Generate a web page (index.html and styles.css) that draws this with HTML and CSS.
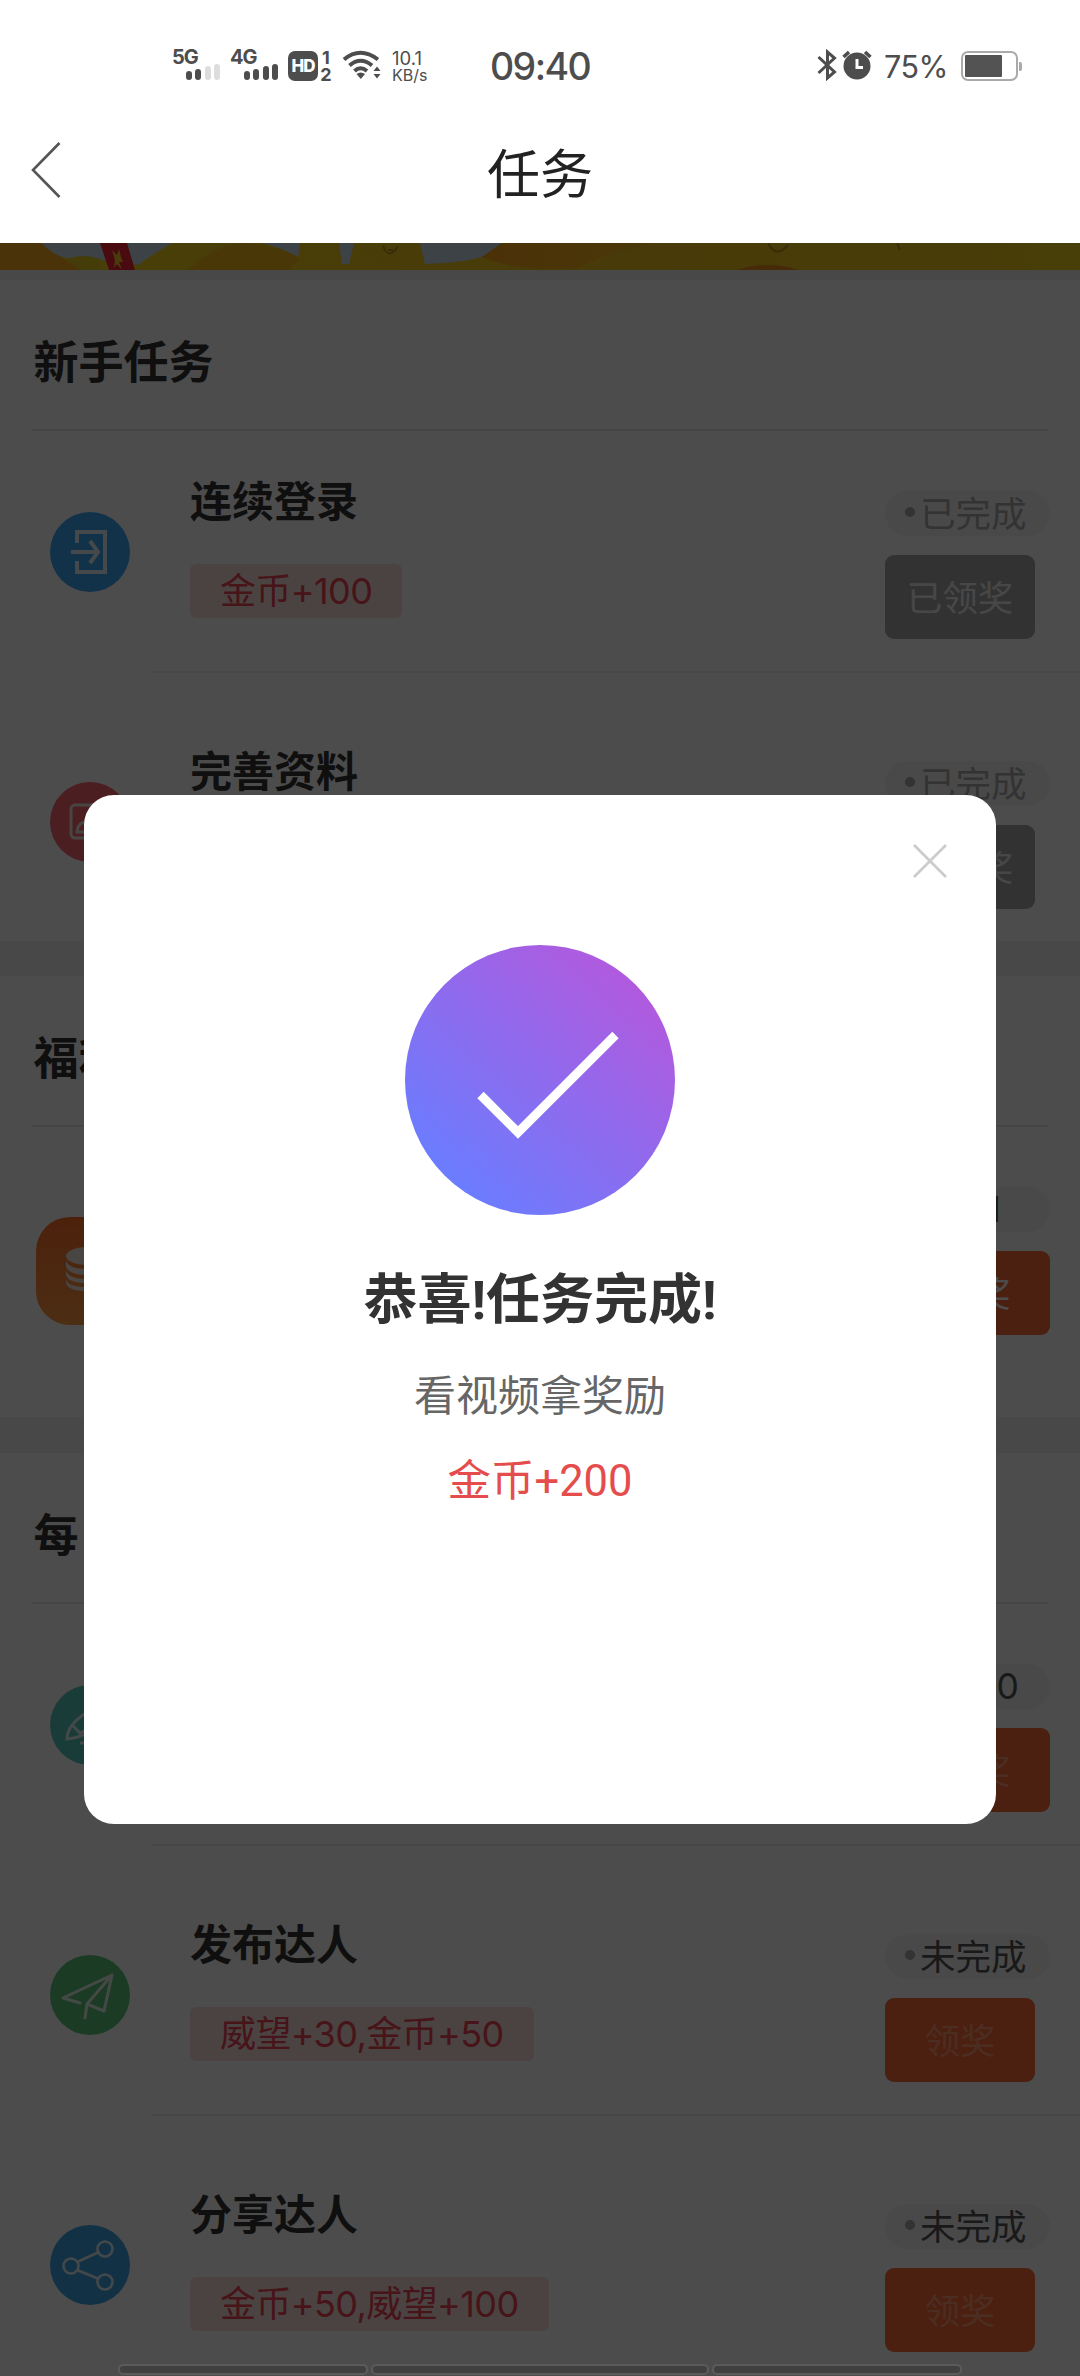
FILE: index.html
```html
<!DOCTYPE html>
<html lang="zh-CN">
<head>
<meta charset="utf-8">
<title>任务</title>
<link rel="stylesheet" href="styles.css">
</head>
<body>
<div class="screen">
  <header class="top">
    <div class="status">
      <div class="signal"><span class="net">5G</span><span class="bars"><i class="b1"></i><i class="b2"></i><i class="b3 off"></i><i class="b4 off"></i></span></div>
      <div class="signal second"><span class="net">4G</span><span class="bars"><i class="b1"></i><i class="b2"></i><i class="b3"></i><i class="b4"></i></span></div>
      <div class="hd">HD</div>
      <div class="sims"><span>1</span><span>2</span></div>
      <svg class="wifi" width="40" height="32" viewBox="0 0 40 32" fill="none" stroke="#4d4d4d" stroke-width="4">
        <path d="M2 10.500Q18 -3 36 10.500M7.500 16.500Q18.500 7 30 16.500M12.500 22Q18.500 16.500 25 22"/>
        <path d="M14.500 25Q18.500 22 23 25L18.800 30Z" fill="#4d4d4d" stroke="none"/>
        <path d="M31.500 22L35 17.500L38.500 22ZM31.500 25L35 29.500L38.500 25Z" fill="#4d4d4d" stroke="none"/>
      </svg>
      <div class="speed"><span class="num">10.1</span><span>KB/s</span></div>
      <div class="clock">09:40</div>
      <svg class="bt" width="20" height="32" viewBox="0 0 20 32" fill="none" stroke="#4d4d4d" stroke-width="3"><path d="M1.500 8L17.500 23L10.500 29V3L17.500 9L1.500 24"/></svg>
      <svg class="alarm" width="30" height="32" viewBox="0 0 30 32"><circle cx="15" cy="17" r="13.500" fill="#4d4d4d"/><path d="M1.500 8L7 3M28.500 8L23 3" stroke="#4d4d4d" stroke-width="3.500"/><path d="M15 10V18.500H21" fill="none" stroke="#fff" stroke-width="3"/></svg>
      <div class="percent">75%</div>
      <div class="battery"><i></i></div><div class="nub"></div>
    </div>
    <div class="navbar">
      <svg class="back" width="30" height="58" viewBox="0 0 30 58"><path d="M28.500 2L2 29L28.500 56" fill="none" stroke="#555" stroke-width="2.600"/></svg>
      <h1>任务</h1>
    </div>
  </header>

  <main class="content">
    <svg class="banner" width="1080" height="27" viewBox="0 0 1080 27">
      <defs><linearGradient id="gold"><stop offset="0" stop-color="#f3d41c"/><stop offset=".6" stop-color="#f2c41e"/><stop offset="1" stop-color="#f0d01a"/></linearGradient>
      <linearGradient id="amber"><stop offset="0" stop-color="#fca31a"/><stop offset="1" stop-color="#f5bd1c"/></linearGradient></defs>
      <rect width="1080" height="27" fill="url(#gold)"/>
      <path d="M0 0H41Q60 14 82 27H0Z" fill="#f9a91e"/>
      <path d="M41 0H172Q150 13 138 22L80 14Q62 20 41 0Z" fill="#c8dcec"/>
      <path d="M66 16Q84 10 100 16V27H80Z" fill="#e5ce22"/>
      <path d="M188 27Q215 0 245 0Q285 4 300 15L290 27Z" fill="#f7b91c"/>
      <path d="M262 0H300L298 14Q280 4 262 0ZM339 0H354L349 21H342ZM420 0H502Q490 12 482 14Q460 20 425 21Z" fill="#c8dcec"/>
      <path d="M502 0H660Q610 8 578 25Q520 30 482 14Q490 8 502 0Z" fill="url(#amber)"/>
      <path d="M100 0H127L135 27H109Z" fill="#f42637"/>
      <path d="M112 7L117 12L119 6L121 14L123 19L119 19L122 27L117 21L114 25L115 17Z" fill="#f4c52a"/>
      <path d="M383 3Q389 18 398 3M388 7L393 7M768 0Q776 16 788 2M897 0L900 7" fill="none" stroke="#c09418" stroke-width="2"/>
      <path d="M736 27Q767 17 799 27Z" fill="#ef8c1d"/>
    </svg>
    <div class="gap first"></div>

    <section>
      <h2>新手任务</h2>
      <div class="task">
        <svg class="icon" width="80" height="80" viewBox="0 0 80 80"><circle cx="40" cy="40" r="40" fill="#3fa9f5"/><g fill="none" stroke="#e8f3fb" stroke-width="4"><path d="M27 31V20H55V60H27V49M21 40H47M40 29L48 40L40 51"/></g></svg>
        <div class="info"><h3>连续登录</h3><span class="reward">金币+100</span></div>
        <div class="side"><div class="pill done"><i></i>已完成</div><div class="btn claimed">已领奖</div></div>
      </div>
      <div class="task next">
        <svg class="icon" width="80" height="80" viewBox="0 0 80 80"><circle cx="40" cy="40" r="40" fill="#fb646e"/><g fill="none" stroke="#f6e3e4" stroke-width="3"><rect x="21" y="23" width="38" height="33" rx="4"/><path d="M27 50Q28 40 36 40Q44 40 45 50Z"/></g></svg>
        <div class="info"><h3>完善资料</h3></div>
        <div class="side"><div class="pill done"><i></i>已完成</div><div class="btn claimed">已领奖</div></div>
      </div>
    </section>
    <div class="gap"></div>

    <section>
      <h2>福利任务</h2>
      <div class="task welfare">
        <svg class="icon big" width="108" height="108" viewBox="0 0 108 108"><defs><linearGradient id="org" x2="0" y2="1"><stop stop-color="#ff7028"/><stop offset="1" stop-color="#ff9a42"/></linearGradient></defs><rect width="108" height="108" rx="34" fill="url(#org)"/><g fill="#f2e8e0"><ellipse cx="51" cy="39" rx="21" ry="9"/><path d="M30 43Q32 52 51 52Q70 52 72 43V49Q70 58 51 58Q32 58 30 49ZM30 53Q32 62 51 62Q70 62 72 53V58Q70 66 51 66Q32 66 30 58ZM30 62Q32 70 51 70Q70 70 72 62V66Q70 74 51 74Q32 74 30 66Z"/></g></svg>
        <div class="side wide"><div class="pill count one">0/1</div><div class="btn active">领奖</div></div>
      </div>
    </section>
    <div class="gap last"></div>

    <section>
      <h2>每日任务</h2>
      <div class="task">
        <svg class="icon" width="80" height="80" viewBox="0 0 80 80"><circle cx="40" cy="40" r="40" fill="#55c9bd"/><g fill="none" stroke="#e0f2f0" stroke-width="3"><path d="M17 54Q17 40 36 28L46 38Q38 52 17 54ZM23 41L30 48L36 45M30 58H52"/></g></svg>
        <div class="side wide"><div class="pill count">0/10</div><div class="btn">领奖</div></div>
      </div>
      <div class="task next">
        <svg class="icon" width="80" height="80" viewBox="0 0 80 80"><circle cx="40" cy="40" r="40" fill="#5dc67b"/><g fill="none" stroke="#e5f4ea" stroke-width="3" stroke-linejoin="round" stroke-linecap="round"><path d="M30 48L13 43L62 20L54 56L37 49L62 20M37 49L35 63"/></g></svg>
        <div class="info"><h3>发布达人</h3><span class="reward">威望+30,金币+50</span></div>
        <div class="side"><div class="pill"><i></i>未完成</div><div class="btn">领奖</div></div>
      </div>
      <div class="task next">
        <svg class="icon" width="80" height="80" viewBox="0 0 80 80"><circle cx="40" cy="40" r="40" fill="#3fa5e5"/><g fill="none" stroke="#e2f0f9" stroke-width="2.600"><circle cx="21" cy="41" r="7.500"/><circle cx="55" cy="24" r="7.500"/><circle cx="55" cy="57" r="7.500"/><path d="M27 37L49 27M27 45L49 54"/></g></svg>
        <div class="info"><h3>分享达人</h3><span class="reward">金币+50,威望+100</span></div>
        <div class="side"><div class="pill"><i></i>未完成</div><div class="btn">领奖</div></div>
      </div>
    </section>
  </main>

  <div class="mask">
    <div class="dialog">
      <svg class="close" width="34" height="34" viewBox="0 0 34 34"><path d="M1 1L33 33M33 1L1 33" stroke="#ccc" stroke-width="2.800"/></svg>
      <svg class="ok" width="270" height="270" viewBox="0 0 270 270"><defs><linearGradient id="violet" x1=".12" y1=".85" x2=".8" y2=".1"><stop stop-color="#6a7dff"/><stop offset="1" stop-color="#b05ade"/></linearGradient></defs><circle cx="135" cy="135" r="135" fill="url(#violet)"/><path d="M75.500 150L113 187.500L210.500 90" fill="none" stroke="#fff" stroke-width="9"/></svg>
      <div class="headline">恭喜!任务完成!</div>
      <div class="sub">看视频拿奖励</div>
      <div class="coins">金币+200</div>
    </div>
  </div>
  <div class="gesture"><i></i><i class="mid"></i><i></i></div>
</div>
</body>
</html>
```
FILE: styles.css
```css
* { box-sizing: border-box; }
body { margin: 0; background: #fff; font-family: "Noto Sans CJK SC", "Noto Sans", sans-serif; }
h1, h2, h3 { margin: 0; }
svg { display: block; flex: none; }
.screen { position: relative; width: 1080px; height: 2376px; overflow: hidden; background: #fff; }

.top { height: 243px; }
.status { display: flex; height: 97px; padding: 49px 0 0 172px; color: #4d4d4d; font-family: Inter, sans-serif; }
.signal { width: 48px; height: 32px; }
.signal.second { margin-left: 10px; }
.net { display: block; height: 15px; font-size: 20px; font-weight: 700; line-height: 16px; letter-spacing: -1px; }
.bars { display: flex; align-items: flex-end; justify-content: flex-end; gap: 3.500px; height: 16px; }
.bars i { width: 6px; border-radius: 3px; background: #4d4d4d; }
.bars i.off { background: #ddd; }
.b1 { height: 9px; }
.b2 { height: 11px; }
.b3 { height: 14px; }
.b4 { height: 16px; }
.hd { width: 30px; height: 30px; margin: 2px 0 0 10px; border-radius: 7px; background: #4d4d4d; color: #fff; font-size: 17px; font-weight: 800; line-height: 30px; text-align: center; letter-spacing: -1px; }
.sims { display: flex; flex-direction: column; width: 12px; margin-left: 2px; font-size: 18px; font-weight: 700; line-height: 17px; text-align: center; }
.wifi { margin-left: 10px; }
.speed { display: flex; flex-direction: column; width: 60px; margin-left: 10px; font-size: 16px; line-height: 14px; padding-top: 2px; }
.speed .num { font-size: 18.500px; line-height: 15px; }
.speed span + span { margin-top: 2px; }
.clock { width: 110px; margin-left: 38px; font-size: 37.500px; font-weight: 500; line-height: 35px; letter-spacing: -1.600px; }
.bt { margin-left: 217px; }
.alarm { margin-left: 5px; }
.percent { width: 70px; margin-left: 12px; font-size: 30.500px; line-height: 36px; letter-spacing: -.5px; }
.battery { width: 57px; height: 30px; margin: 2px 0 0 7px; padding: 2px; border: 2px solid #aaa; border-radius: 7px; }
.battery i { display: block; width: 37px; height: 22px; border-radius: 1px; background: #535353; }
.nub { width: 3px; height: 9px; margin: 13px 0 0 1px; background: #aaa; border-radius: 0 2px 2px 0; }
.navbar { display: flex; height: 146px; padding-left: 31px; }
.back { margin-top: 44px; }
h1 { width: 958px; color: #222; font-size: 53px; font-weight: 400; line-height: 149px; text-align: center; }

.banner { height: 27px; }
.gap { height: 35px; background: #f2f2f2; }
.gap.first { height: 10px; }
.gap.last { height: 36px; }
h2 { height: 151px; margin: 0 32px; padding-left: 1.500px; border-bottom: 2px solid #e6e6e6; color: #333; font-size: 45px; font-weight: 700; line-height: 160px; }
.task { display: flex; height: 240px; padding-left: 50px; }
.task.next { height: 270px; padding-top: 30px; }
.task.welfare { height: 290px; padding-left: 36px; }
.task + .task { background: linear-gradient(#eee, #eee) 152px 0 / 928px 2px no-repeat; }
.icon { margin-top: 81px; }
.icon.big { margin-top: 90px; }
.info { margin-left: 60px; padding-top: 38px; }
h3 { height: 60px; color: #333; font-size: 42px; font-weight: 700; line-height: 60px; }
.reward { display: block; height: 54px; margin-top: 35px; padding: 0 30px; border-radius: 6px; background: #fae2d9; color: #ec4454; font-family: Inter, "Noto Sans CJK SC", sans-serif; font-size: 36px; letter-spacing: -.6px; line-height: 55px; white-space: nowrap; }
.side { display: flex; flex-direction: column; width: 195px; margin-left: auto; padding-top: 60px; }
.side.wide { width: 180px; }
.pill { display: flex; align-items: center; width: 165px; height: 45px; padding-left: 20px; border-radius: 23px; background: #f5f5f5; color: #555; font-size: 35.500px; line-height: 40px; padding-bottom: 4px; white-space: nowrap; }
.pill i { flex: none; width: 10px; height: 10px; margin: 0 5px 0 0; border-radius: 50%; background: #aaa; }
.pill.done { color: #aaa; }
.pill.count { align-self: flex-end; justify-content: flex-end; margin-right: 30px; padding: 0 31px 0 0; font-family: Inter, "Noto Sans CJK SC", sans-serif; }
.pill.one { padding-right: 49px; }
.btn { width: 150px; height: 84px; margin-top: 19px; border-radius: 9px; background: #fc6b38; color: #ff9672; font-size: 35.500px; line-height: 81px; text-align: center; }
.btn.claimed { background: #a9a9a9; color: #eee; }
.btn.active { color: #fff; }

/* Dimmed layer and the reward dialog, above the task list */
.mask { position: absolute; top: 243px; right: 0; bottom: 0; left: 0; padding: 552px 84px 0; background: rgba(0, 0, 0, .7); }
.dialog { display: flex; flex-direction: column; align-items: center; height: 1029px; padding-top: 49px; border-radius: 30px; background: #fff; }
.close { align-self: flex-end; margin-right: 49px; }
.ok { margin-top: 67px; }
.headline { margin-top: 46px; color: #333; font-size: 54px; font-weight: 700; line-height: 80px; font-family: Roboto, "Noto Sans CJK SC", sans-serif; }
.sub { margin-top: 22px; color: #666; font-size: 42px; line-height: 60px; }
.coins { margin-top: 29px; color: #e54d4d; font-family: Roboto, "Noto Sans CJK SC", sans-serif; font-size: 43.500px; line-height: 60px; }
.gesture { position: absolute; left: 118px; bottom: 1px; display: flex; gap: 3px; }
.gesture i { width: 250px; height: 11px; border: 2px solid #5b5b5b; border-radius: 5px; background: #404040; }
.gesture .mid { width: 338px; }
```
